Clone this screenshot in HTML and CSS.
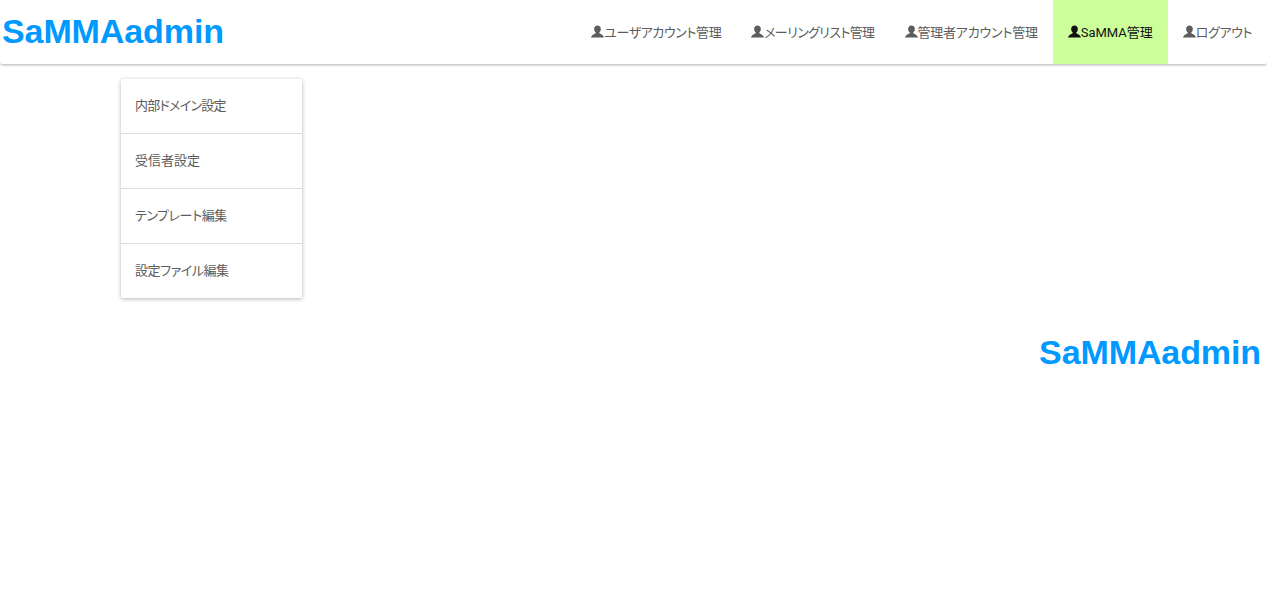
FILE: index.html
```html
<!DOCTYPE html>
<html lang="ja">
<head>
<meta charset="utf-8">
<title>SaMMAadmin</title>
<link rel="stylesheet" href="styles.css">
</head>
<body>
<svg class="sprite" width="0" height="0" aria-hidden="true"><symbol id="user" viewBox="0 0 14 13"><path d="M7 0C4.900 0 3.400 1.500 3.400 3.700c0 1.500.6 2.900 1.600 3.700v1C4 9.300 1 9.800 0 13h14c-1-3.200-4-3.700-5-4.600v-1c1-.8 1.600-2.200 1.600-3.700C10.600 1.500 9.100 0 7 0z"/></symbol></svg>
<header class="navbar">
  <div class="brand">SaMMAadmin</div>
  <nav class="nav">
    <a class="nav-item kana"><svg class="icon"><use href="#user"/></svg>ユーザアカウント管理</a>
    <a class="nav-item kana-tight"><svg class="icon"><use href="#user"/></svg>メーリングリスト管理</a>
    <a class="nav-item kana-loose"><svg class="icon"><use href="#user"/></svg>管理者アカウント管理</a>
    <a class="nav-item active"><svg class="icon"><use href="#user"/></svg>SaMMA管理</a>
    <a class="nav-item kana"><svg class="icon"><use href="#user"/></svg>ログアウト</a>
  </nav>
</header>
<main>
  <ul class="menu">
    <li class="kana-wide">内部ドメイン設定</li>
    <li>受信者設定</li>
    <li class="kana">テンプレート編集</li>
    <li class="kana">設定ファイル編集</li>
  </ul>
  <div class="brand-large">SaMMAadmin</div>
</main>
</body>
</html>
```
FILE: styles.css
```css
* { box-sizing: border-box; }
html, body { margin: 0; padding: 0; background: #fff; }
body {
  font-family: Roboto, "Noto Sans CJK JP", sans-serif;
  font-size: 13px;
  font-feature-settings: "palt";
  color: #5c5c5c;
  overflow: hidden;
  height: 607px;
}
.sprite { position: absolute; }
.kana { letter-spacing: -.42px; }
.kana-tight { letter-spacing: -.62px; }
.kana-loose { letter-spacing: -.22px; }
.kana-wide { letter-spacing: -.75px; }
.navbar {
  display: flex;
  justify-content: space-between;
  align-items: stretch;
  height: 65px;
  border-bottom: 1px solid #ccc;
  border-radius: 0 0 3px 3px;
  box-shadow: 0 1px 2px rgba(0,0,0,.15);
}
.brand, .brand-large {
  font-family: "Liberation Sans", Arial, sans-serif;
  font-weight: 700;
  color: #0099ff;
  white-space: nowrap;
  font-size: 34px;
  letter-spacing: -.1px;
}
.brand {
  line-height: 63px;
  padding-left: 2px;
}
.nav { display: flex; }
.nav-item {
  display: flex;
  align-items: center;
  height: 63px;
  padding: 0 15px;
  white-space: nowrap;
}
.nav-item.active { height: 64px; padding-bottom: 1px; background: #ccff99; color: #111; }
.icon { width: 13px; height: 13px; fill: currentColor; flex: none; }
.menu {
  list-style: none;
  width: 181px;
  margin: 14px 0 0 121px;
  padding: 0;
  background: #fff;
  border-radius: 2px;
  box-shadow: 0 1px 4px rgba(0,0,0,.3);
}
.menu li {
  height: 55px;
  padding: 0 14px;
  line-height: 54px;
  border-bottom: 1px solid #ddd;
}
.menu li:last-child { height: 54px; border-bottom: 0; }
.brand-large {
  line-height: 40px;
  text-align: right;
  padding-right: 6px;
  margin-top: 34px;
}
```
